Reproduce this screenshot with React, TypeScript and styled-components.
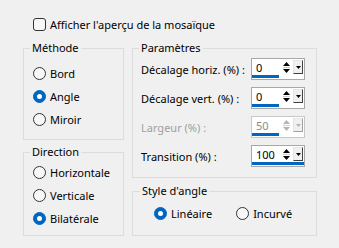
import styled, { createGlobalStyle } from 'styled-components';

const GlobalStyle = createGlobalStyle`
  html, body {
    margin: 0;
    padding: 0;
    background: #f0f0f0;
  }
  body {
    font-family: 'Noto Sans', 'Open Sans', sans-serif;
    font-size: 11px;
    color: #000;
  }
`;

const Dialog = styled.div`
  width: 339px;
  height: 248px;
  box-sizing: border-box;
  padding: 18px 0 0 23px;
`;

const CheckRow = styled.label`
  display: flex;
  align-items: center;
  gap: 4px;
  margin-left: 10px;
  height: 12px;
`;

const CheckBox = styled.span`
  width: 13px;
  height: 13px;
  box-sizing: border-box;
  border: 1px solid #333;
  border-radius: 3px;
  background: #f7f7f7;
`;

const Columns = styled.div`
  display: flex;
  gap: 8px;
  margin-top: 18px;
`;

const Column = styled.div<{ $width: number; $gap: number }>`
  display: flex;
  flex-direction: column;
  width: ${(p) => p.$width}px;
  gap: ${(p) => p.$gap}px;
`;

const Group = styled.div<{ $height: number }>`
  display: flex;
  flex-direction: column;
  box-sizing: border-box;
  height: ${(p) => p.$height}px;
  border: 1px solid #dcdcdc;
`;

const Legend = styled.div<{ $indent?: number }>`
  align-self: flex-start;
  margin: -9px 0 0 ${(p) => p.$indent ?? 6}px;
  padding: 0 2px;
  height: 16px;
  line-height: 16px;
  background: #f0f0f0;
`;

const RadioList = styled.div<{ $top: number }>`
  display: flex;
  flex-direction: column;
  margin-top: ${(p) => p.$top}px;
  padding-left: 9px;
`;

const RadioRow = styled.label`
  display: flex;
  align-items: center;
  gap: 4px;
  height: 23px;
  white-space: nowrap;
`;

const RadioCircle = styled.span<{ $checked?: boolean }>`
  position: relative;
  flex: none;
  width: 13px;
  height: 13px;
  box-sizing: border-box;
  border-radius: 50%;
  border: 1px solid ${(p) => (p.$checked ? '#0067c0' : '#333')};
  background: ${(p) => (p.$checked ? '#0067c0' : '#f7f7f7')};

  &::after {
    content: '';
    display: ${(p) => (p.$checked ? 'block' : 'none')};
    position: absolute;
    left: 3px;
    top: 3px;
    width: 5px;
    height: 5px;
    border-radius: 50%;
    background: #fff;
  }
`;

const InlineRadios = styled.div`
  display: flex;
  align-items: center;
  gap: 24px;
  margin: 3px 0 0 21px;
`;

const ParamList = styled.div`
  display: flex;
  flex-direction: column;
  gap: 7px;
  margin-top: 2px;
  padding-left: 8px;
`;

const ParamRow = styled.div<{ $disabled?: boolean }>`
  display: flex;
  align-items: center;
  height: 22px;
  color: ${(p) => (p.$disabled ? '#a0a0a0' : '#000')};
`;

const ParamLabel = styled.span`
  flex: none;
  width: 110px;
  white-space: nowrap;
`;

const Spin = styled.div<{ $disabled?: boolean }>`
  flex: none;
  display: flex;
  flex-direction: column;
  width: 54px;
  height: 22px;
  box-sizing: border-box;
  border: 1px solid ${(p) => (p.$disabled ? '#c8c8c8' : '#a8a8a8')};
  background: #fff;
  color: ${(p) => (p.$disabled ? '#8a8a8a' : '#000')};
`;

const SpinTop = styled.div`
  flex: 1;
  display: flex;
  align-items: center;
  min-height: 0;
`;

const FieldText = styled.span`
  flex: 1;
  padding: 2px 0 0 4px;
  line-height: 14px;
`;

const Bar = styled.div`
  height: 3px;
  margin-bottom: 1px;
  background: #0067c0;
`;

const Arrows = styled.div<{ $disabled?: boolean }>`
  display: flex;
  flex-direction: column;
  align-items: center;
  gap: 2px;
  width: 9px;
  margin-right: 2px;
  color: ${(p) => (p.$disabled ? '#b4b4b4' : '#000')};
`;

const ArrowSep = styled.div`
  width: 7px;
  height: 1px;
  margin: -1px 0;
  background: #d0d0d0;
`;

const DropButton = styled.div<{ $disabled?: boolean }>`
  display: flex;
  align-items: center;
  justify-content: center;
  width: 10px;
  height: 14px;
  margin-right: 1px;
  box-sizing: border-box;
  border: 1px solid #e6e6e6;
  border-right-color: ${(p) => (p.$disabled ? '#a0a0a0' : '#404040')};
  border-bottom-color: ${(p) => (p.$disabled ? '#a0a0a0' : '#404040')};
  background: #f0f0f0;
  color: ${(p) => (p.$disabled ? '#b4b4b4' : '#000')};
`;

function Radio({ label, checked }: { label: string; checked?: boolean }) {
  return (
    <RadioRow>
      <RadioCircle $checked={checked} />
      {label}
    </RadioRow>
  );
}

interface SpinProps {
  label: string;
  value: string;
  bar: number;
  disabled?: boolean;
}

function SpinField({ label, value, bar, disabled }: SpinProps) {
  return (
    <ParamRow $disabled={disabled}>
      <ParamLabel>{label}</ParamLabel>
      <Spin $disabled={disabled}>
        <SpinTop>
          <FieldText>{value}</FieldText>
          <Arrows $disabled={disabled}>
            <svg width="7" height="4" viewBox="0 0 7 4">
              <path d="M3.5 0 L7 4 L0 4 Z" fill="currentColor" />
            </svg>
            <ArrowSep />
            <svg width="7" height="4" viewBox="0 0 7 4">
              <path d="M0 0 L7 0 L3.5 4 Z" fill="currentColor" />
            </svg>
          </Arrows>
          <DropButton $disabled={disabled}>
            <svg width="5" height="3" viewBox="0 0 5 3">
              <path d="M0 0 L5 0 L2.5 3 Z" fill="currentColor" />
            </svg>
          </DropButton>
        </SpinTop>
        <Bar style={{ width: bar }} />
      </Spin>
    </ParamRow>
  );
}

const params: SpinProps[] = [
  { label: 'Décalage horiz. (%) :', value: '0', bar: 27 },
  { label: 'Décalage vert. (%) :', value: '0', bar: 27 },
  { label: 'Largeur (%) :', value: '50', bar: 27, disabled: true },
  { label: 'Transition (%) :', value: '100', bar: 52 },
];

export default function App() {
  return (
    <>
      <GlobalStyle />
      <Dialog>
        <CheckRow>
          <CheckBox />
          Afficher l'aperçu de la mosaïque
        </CheckRow>
        <Columns>
          <Column $width={101} $gap={12}>
            <Group $height={92}>
              <Legend>Méthode</Legend>
              <RadioList $top={6}>
                <Radio label="Bord" />
                <Radio label="Angle" checked />
                <Radio label="Miroir" />
              </RadioList>
            </Group>
            <Group $height={84}>
              <Legend>Direction</Legend>
              <RadioList $top={1}>
                <Radio label="Horizontale" />
                <Radio label="Verticale" />
                <Radio label="Bilatérale" checked />
              </RadioList>
            </Group>
          </Column>
          <Column $width={185} $gap={13}>
            <Group $height={130}>
              <Legend>Paramètres</Legend>
              <ParamList>
                {params.map((p) => (
                  <SpinField key={p.label} {...p} />
                ))}
              </ParamList>
            </Group>
            <Group $height={45}>
              <Legend $indent={7}>Style d'angle</Legend>
              <InlineRadios>
                <Radio label="Linéaire" checked />
                <Radio label="Incurvé" />
              </InlineRadios>
            </Group>
          </Column>
        </Columns>
      </Dialog>
    </>
  );
}
